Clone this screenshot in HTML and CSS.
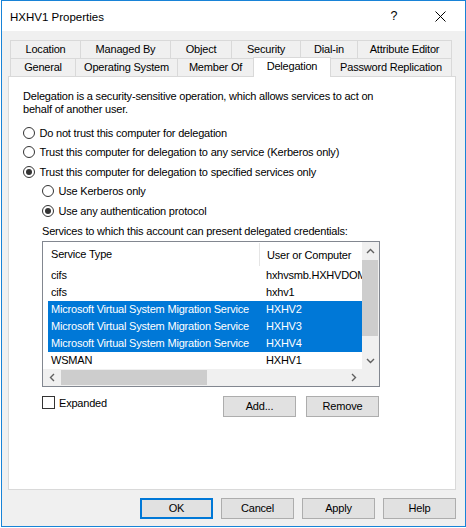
FILE: index.html
```html
<!DOCTYPE html>
<html>
<head>
<meta charset="utf-8">
<title>HXHV1 Properties</title>
<link rel="stylesheet" href="styles.css">
</head>
<body>
<div class="window">
  <div class="titlebar">
    <span class="title">HXHV1 Properties</span>
    <span class="cap-btn help">?</span>
    <span class="cap-btn close">
      <svg width="11" height="11" viewBox="0 0 11 11"><path d="M0.5 0.5 L10.5 10.5 M10.5 0.5 L0.5 10.5" stroke="#000" stroke-width="1" fill="none"/></svg>
    </span>
  </div>
  <div class="client">
    <div class="tabs">
      <div class="tabrow">
        <div class="tab t-loc">Location</div>
        <div class="tab t-mgd">Managed By</div>
        <div class="tab t-obj">Object</div>
        <div class="tab t-sec">Security</div>
        <div class="tab t-dial">Dial-in</div>
        <div class="tab t-attr last">Attribute Editor</div>
      </div>
      <div class="tabrow front">
        <div class="tab t-gen">General</div>
        <div class="tab t-os">Operating System</div>
        <div class="tab t-mem">Member Of</div>
        <div class="tab t-del sel">Delegation</div>
        <div class="tab t-pwd last">Password Replication</div>
      </div>
    </div>
    <div class="panel">
      <p class="desc">Delegation is a security-sensitive operation, which allows services to act on<br>behalf of another user.</p>
      <div class="radios">
        <div class="radio"><span class="dot"></span><span>Do not trust this computer for delegation</span></div>
        <div class="radio"><span class="dot"></span><span>Trust this computer for delegation to any service (Kerberos only)</span></div>
        <div class="radio"><span class="dot on"></span><span>Trust this computer for delegation to specified services only</span></div>
        <div class="radio sub"><span class="dot"></span><span>Use Kerberos only</span></div>
        <div class="radio sub"><span class="dot on"></span><span>Use any authentication protocol</span></div>
      </div>
      <div class="sub">
        <div class="label">Services to which this account can present delegated credentials:</div>
        <div class="listbox">
          <div class="lv-content">
            <div class="lv-head">
              <div class="c1">Service Type</div>
              <div class="c2">User or Computer</div>
            </div>
            <div class="lv-row"><div class="c1">cifs</div><div class="c2">hxhvsmb.HXHVDOM</div></div>
            <div class="lv-row"><div class="c1">cifs</div><div class="c2">hxhv1</div></div>
            <div class="lv-row selected"><div class="c1">Microsoft Virtual System Migration Service</div><div class="c2">HXHV2</div></div>
            <div class="lv-row selected"><div class="c1">Microsoft Virtual System Migration Service</div><div class="c2">HXHV3</div></div>
            <div class="lv-row selected"><div class="c1">Microsoft Virtual System Migration Service</div><div class="c2">HXHV4</div></div>
            <div class="lv-row"><div class="c1">WSMAN</div><div class="c2">HXHV1</div></div>
          </div>
          <div class="vscroll">
            <div class="sb-btn"><svg width="9" height="6" viewBox="0 0 9 6"><polyline points="1,5 4.5,1.5 8,5" fill="none" stroke="#606060" stroke-width="1.4"/></svg></div>
            <div class="vthumb"></div>
            <div class="sb-fill"></div>
            <div class="sb-btn"><svg width="9" height="6" viewBox="0 0 9 6"><polyline points="1,1 4.5,4.5 8,1" fill="none" stroke="#606060" stroke-width="1.4"/></svg></div>
          </div>
          <div class="hscroll">
            <div class="sb-btn"><svg width="6" height="9" viewBox="0 0 6 9"><polyline points="5,1 1.5,4.5 5,8" fill="none" stroke="#606060" stroke-width="1.4"/></svg></div>
            <div class="hthumb"></div>
            <div class="sb-fill"></div>
            <div class="sb-btn"><svg width="6" height="9" viewBox="0 0 6 9"><polyline points="1,1 4.5,4.5 1,8" fill="none" stroke="#606060" stroke-width="1.4"/></svg></div>
            <div class="corner"></div>
          </div>
        </div>
        <div class="options">
          <label class="check"><span class="box"></span><span>Expanded</span></label>
          <div class="btn add">Add...</div>
          <div class="btn">Remove</div>
        </div>
      </div>
    </div>
    <div class="footer">
      <div class="btn default">OK</div>
      <div class="btn">Cancel</div>
      <div class="btn">Apply</div>
      <div class="btn">Help</div>
    </div>
  </div>
</div>
</body>
</html>
```
FILE: styles.css
```css
* { box-sizing: border-box; }
html, body { margin: 0; padding: 0; }
body {
  background: #ffffff;
  width: 466px;
  height: 528px;
  overflow: hidden;
  font-family: "Liberation Sans", Arial, sans-serif;
  font-size: 11px;
  letter-spacing: -0.2px;
  color: #000;
}
.window {
  margin-left: 1px;
  width: 465px;
  height: 527px;
  border: 1px solid #1883d7;
  background: #f0f0f0;
  display: flex;
  flex-direction: column;
}
.titlebar {
  height: 30px;
  background: #fff;
  display: flex;
  align-items: center;
  padding-left: 8px;
  flex: none;
}
.title {
  flex: 1;
  font-size: 11.5px;
  letter-spacing: 0;
  padding-top: 1px;
}
.cap-btn {
  width: 46px;
  height: 30px;
  display: flex;
  align-items: center;
  justify-content: center;
}
.help { font-size: 12.5px; letter-spacing: 0; }
.close { margin-right: 2px; }

.client {
  flex: 1;
  display: flex;
  flex-direction: column;
  padding: 9px 9px 0 6px;
}
.tabs { margin-left: 2px; }
.tabrow {
  display: flex;
  height: 18px;
}
.tabrow.front { align-items: flex-end; }
.tab {
  height: 18px;
  border-top: 1px solid #d9d9d9;
  border-left: 1px solid #d9d9d9;
  text-align: center;
  line-height: 17px;
  white-space: nowrap;
  flex: none;
}
.tab.last { border-right: 1px solid #d9d9d9; }
.t-loc { width: 70px; }
.t-mgd { width: 90px; }
.t-obj { width: 61px; }
.t-sec { width: 69px; }
.t-dial { width: 57px; }
.t-attr { width: 95px; }
.t-gen { width: 65px; }
.t-os { width: 102px; }
.t-mem { width: 76px; }
.t-del { width: 78px; }
.t-pwd { width: 122px; }
.tab.sel {
  height: 20px;
  margin-bottom: -1px;
  margin-right: -1px;
  background: #fff;
  border-right: 1px solid #d9d9d9;
  line-height: 13px;
  padding-top: 2px;
  position: relative;
  z-index: 1;
}

.panel {
  height: 414px;
  background: #fff;
  border: 1px solid #d9d9d9;
  padding: 13px 0 0 14px;
  flex: none;
}
.desc {
  margin: 0;
  line-height: 13px;
}
.radios { margin-top: 7px; }
.radio {
  display: flex;
  align-items: center;
  height: 19.5px;
  white-space: nowrap;
}
.dot {
  width: 12px;
  height: 12px;
  border: 1px solid #333;
  border-radius: 50%;
  background: #fff;
  margin-right: 4.5px;
  display: flex;
  align-items: center;
  justify-content: center;
  flex: none;
}
.dot.on::after {
  content: "";
  width: 6px;
  height: 6px;
  border-radius: 50%;
  background: #333;
}
.sub { margin-left: 19px; }
.label {
  margin-top: 4px;
  line-height: 13px;
}
.listbox {
  margin-top: 3.5px;
  width: 338px;
  height: 146px;
  border: 1px solid #828790;
  background: #fff;
  display: grid;
  grid-template-columns: 1fr 17px;
  grid-template-rows: 127px 17px;
}
.lv-content { overflow: hidden; }
.lv-head {
  display: flex;
  height: 25px;
  align-items: center;
}
.lv-head .c1 {
  width: 217px;
  padding-left: 8px;
  height: 23px;
  line-height: 23px;
  border-right: 1px solid #e5e5e5;
  flex: none;
}
.lv-head .c2 { padding-left: 7px; white-space: nowrap; }
.lv-row {
  display: flex;
  height: 17px;
  line-height: 17px;
  margin-left: 5px;
  white-space: nowrap;
}
.lv-row .c1 { width: 211px; padding-left: 3px; flex: none; overflow: hidden; }
.lv-row .c2 { padding-left: 7px; }
.lv-row.selected { background: #0078d7; color: #fff; }

.vscroll {
  background: #f0f0f0;
  display: flex;
  flex-direction: column;
}
.sb-btn {
  width: 17px;
  height: 17px;
  display: flex;
  align-items: center;
  justify-content: center;
  flex: none;
}
.sb-fill { flex: 1; }
.vthumb {
  margin: 1px 1px 0 0;
  height: 76px;
  background: #cdcdcd;
  flex: none;
}
.hscroll {
  grid-column: 1 / span 2;
  background: #f0f0f0;
  display: flex;
}
.hthumb {
  margin: 1px 0 1px 1px;
  width: 146px;
  background: #cdcdcd;
  flex: none;
}
.corner { width: 17px; flex: none; }

.options {
  margin-top: 9px;
  width: 337px;
  display: flex;
  align-items: flex-start;
}
.check {
  display: flex;
  align-items: center;
  height: 13px;
  margin-right: auto;
}
.box {
  width: 13px;
  height: 13px;
  border: 1px solid #333;
  background: #fff;
  margin-right: 4px;
}
.btn {
  width: 73px;
  height: 21px;
  background: #e1e1e1;
  border: 1px solid #adadad;
  text-align: center;
  line-height: 19px;
  flex: none;
}
.btn.add { margin-right: 10px; }
.btn.default {
  border: 2px solid #0078d7;
  line-height: 17px;
}
.footer {
  margin-top: 8px;
  display: flex;
  justify-content: flex-end;
  gap: 8px;
}
```
